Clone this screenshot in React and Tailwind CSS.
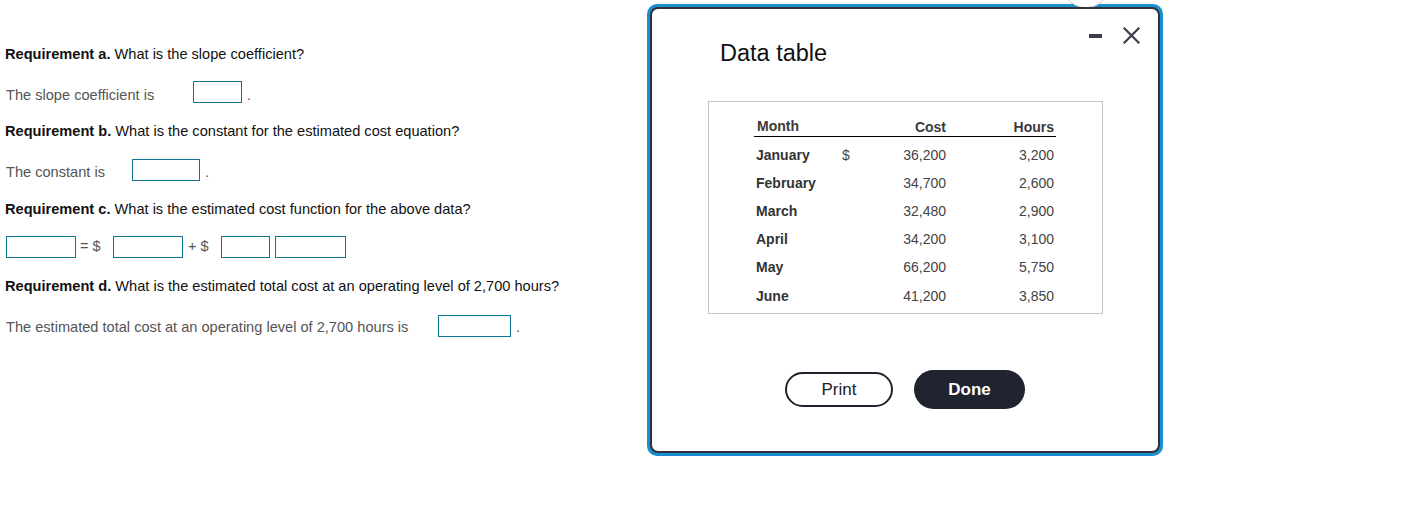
const ROWS = [
  { month: 'January', cost: '36,200', hours: '3,200', dollar: true },
  { month: 'February', cost: '34,700', hours: '2,600' },
  { month: 'March', cost: '32,480', hours: '2,900' },
  { month: 'April', cost: '34,200', hours: '3,100' },
  { month: 'May', cost: '66,200', hours: '5,750' },
  { month: 'June', cost: '41,200', hours: '3,850' },
]

function Box({ w }) {
  return <div className={`h-[22px] shrink-0 border border-[#0f7592] bg-white ${w}`} />
}

function Req({ letter, children, mt }) {
  return (
    <p className={`h-5 leading-5 text-[14.6px] text-[#111] ${mt}`}>
      <span className="font-bold">Requirement {letter}.</span> {children}
    </p>
  )
}

export default function App() {
  return (
    <div className="flex min-h-[532px] bg-white text-[14.6px]" style={{ fontFamily: '"Liberation Sans", Arial, sans-serif' }}>
      {/* Question column */}
      <div className="w-[647px] shrink-0 pl-[5px] pt-[44px]">
        <Req letter="a">What is the slope coefficient?</Req>

        <div className="mt-[17px] flex h-[22px] items-start">
          <span className="w-[188px] pl-[1px] pt-[4px] leading-5 text-[#555]">The slope coefficient is</span>
          <Box w="w-[49px]" />
          <span className="ml-[5px] pt-[4px] leading-5 text-[#555]">.</span>
        </div>

        <Req letter="b" mt="mt-[18px]">What is the constant for the estimated cost equation?</Req>

        <div className="mt-[18px] flex h-[22px] items-start">
          <span className="w-[127px] pl-[1px] pt-[3px] leading-5 text-[#555]">The constant is</span>
          <Box w="w-[68px]" />
          <span className="ml-[5px] pt-[3px] leading-5 text-[#555]">.</span>
        </div>

        <Req letter="c" mt="mt-[18px]">What is the estimated cost function for the above data?</Req>

        <div className="mt-[17px] flex h-[22px] items-center pl-[1px]">
          <Box w="w-[70px]" />
          <span className="ml-[4px] w-[33px] text-[#555]">= $</span>
          <Box w="w-[70px]" />
          <span className="ml-[5px] w-[33px] text-[#555]">+ $</span>
          <Box w="w-[49px]" />
          <div className="ml-[5px]"><Box w="w-[71px]" /></div>
        </div>

        <Req letter="d" mt="mt-[18px]">What is the estimated total cost at an operating level of 2,700 hours?</Req>

        <div className="mt-[19px] flex h-[22px] items-start">
          <span className="w-[433px] pl-[1px] pt-[2px] leading-5 text-[#555]">The estimated total cost at an operating level of 2,700 hours is</span>
          <Box w="w-[73px]" />
          <span className="ml-[5px] pt-[2px] leading-5 text-[#555]">.</span>
        </div>
      </div>

      {/* Data table dialog */}
      <div className="relative mt-[4px] h-[452px] w-[516px] shrink-0 rounded-[10px] bg-[#1a8fd0] p-[3px]">
        <div className="absolute left-[416px] top-[-40px] h-[44px] w-[46px] rounded-full border border-[#c8c8c8] bg-white" />
        <div className="relative flex h-full flex-col rounded-[8px] border-2 border-[#2f3237] bg-white">
          <div className="flex items-start justify-between">
            <h2 className="ml-[68px] mt-[30px] text-[23.5px] leading-7 text-[#111]">Data table</h2>
            <div className="mr-[18px] mt-[18px] flex items-center gap-[21px]">
              <div className="h-[4px] w-[13px] bg-[#3a3f47]" />
              <svg width="17" height="17" viewBox="0 0 17 17" className="text-[#3a3f47]">
                <path d="M1.5 1.5 L15.5 15.5 M15.5 1.5 L1.5 15.5" stroke="currentColor" strokeWidth="2.2" strokeLinecap="square" />
              </svg>
            </div>
          </div>

          <div className="ml-[56px] mt-[34px] h-[213px] w-[395px] shrink-0 border border-[#c4c4c4] pl-[45px] pt-[14px]">
            <div className="w-[302px] text-[#3a3a3a] text-[14px]">
              <div className="grid h-[21px] grid-cols-[88px_20px_86px_108px] border-b border-black font-bold leading-5">
                <span className="pl-[3px]">Month</span>
                <span />
                <span className="pr-[2px] text-right leading-[22px]">Cost</span>
                <span className="pr-[2px] text-right leading-[22px]">Hours</span>
              </div>
              <div className="mt-[4px]">
                {ROWS.map(r => (
                  <div key={r.month} className="grid h-[28.2px] grid-cols-[88px_20px_86px_108px] items-center">
                    <span className="pl-[2px] font-bold text-[#333]">{r.month}</span>
                    <span className="text-[#444]">{r.dollar ? '$' : ''}</span>
                    <span className="pr-[2px] text-right text-[#444]">{r.cost}</span>
                    <span className="pr-[2px] text-right text-[#444]">{r.hours}</span>
                  </div>
                ))}
              </div>
            </div>
          </div>

          <div className="mt-[56px] flex items-center justify-center gap-[21px]">
            <button className="h-[35px] w-[108px] rounded-full border-2 border-[#1f2430] bg-white text-[17px] text-[#222]">Print</button>
            <button className="h-[39px] w-[111px] rounded-full bg-[#1f2430] text-[17px] font-semibold text-white">Done</button>
          </div>
        </div>
      </div>
    </div>
  )
}
